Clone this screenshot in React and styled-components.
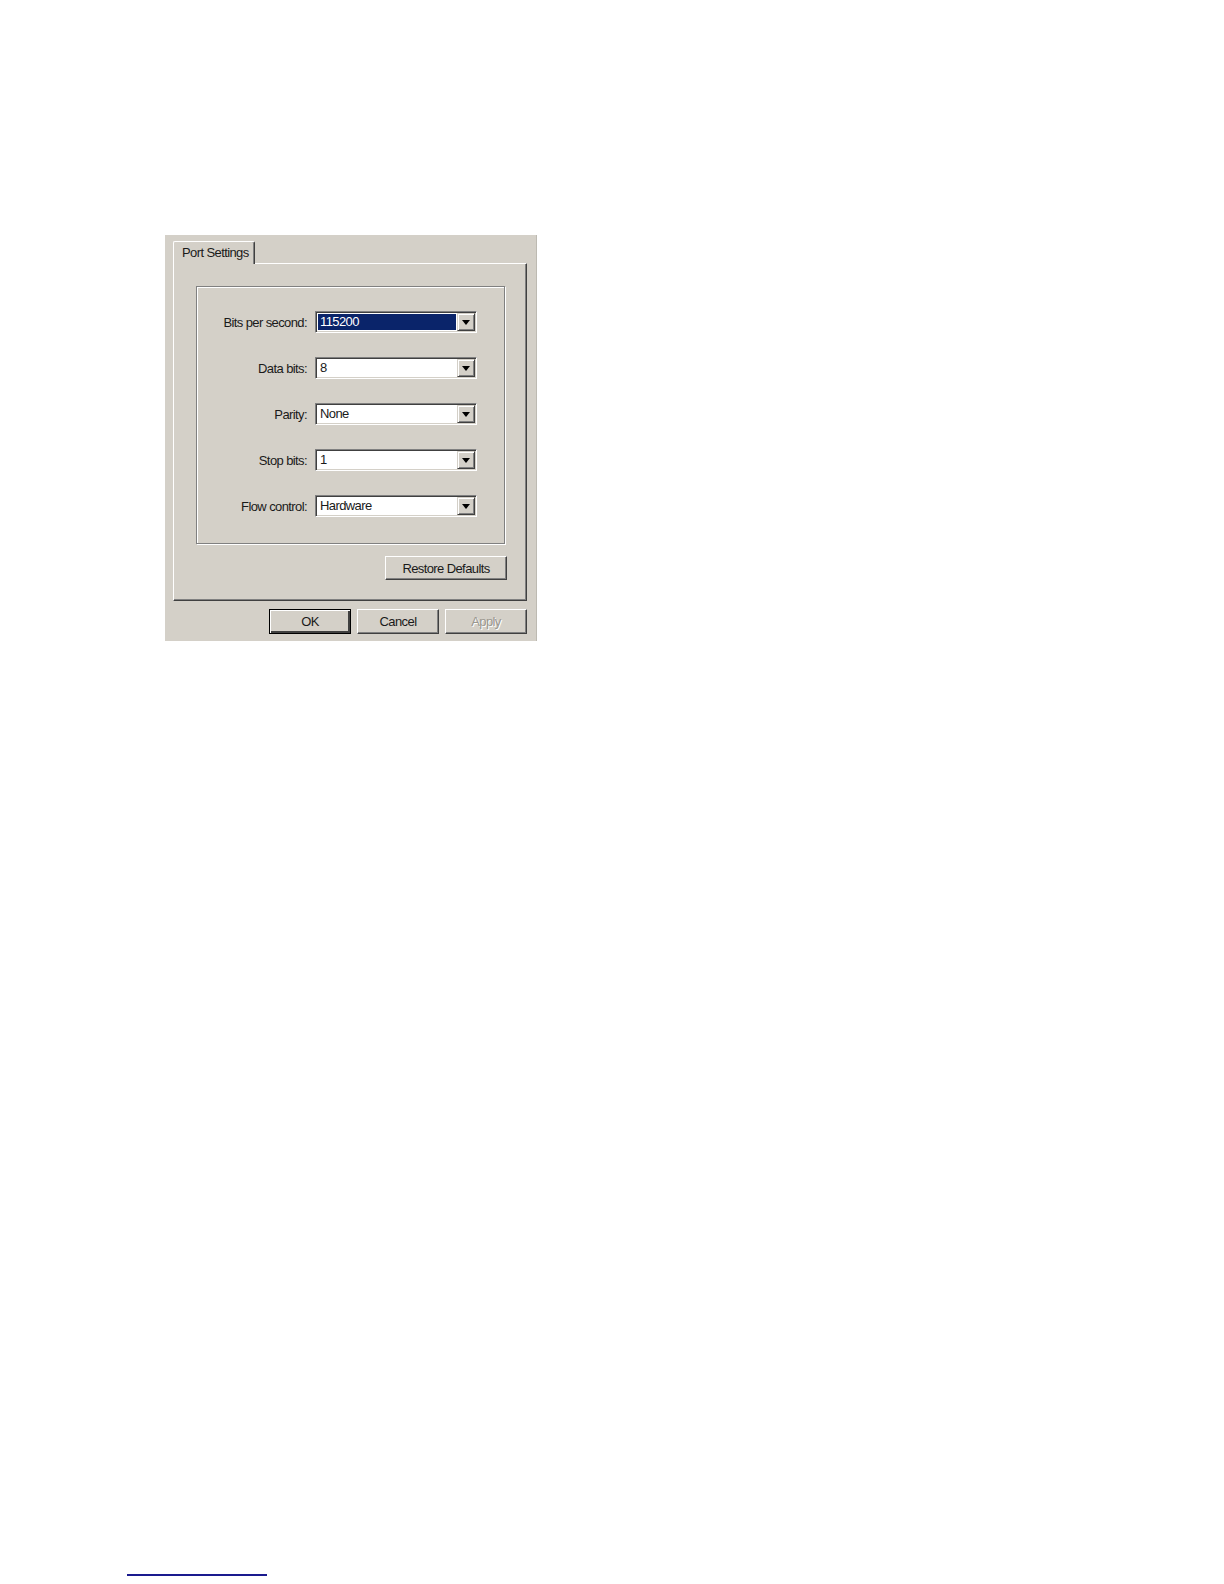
import React from 'react';
import styled, { createGlobalStyle, css } from 'styled-components';

const campos = [
  { label: 'Bits per second:', value: '115200', selected: true },
  { label: 'Data bits:', value: '8' },
  { label: 'Parity:', value: 'None' },
  { label: 'Stop bits:', value: '1' },
  { label: 'Flow control:', value: 'Hardware' },
];

const App = () => (
  <>
    <GlobalStyle />
    <Page>
      <Dialog>
        <TabStrip>
          <Tab>Port Settings</Tab>
        </TabStrip>

        <Panel>
          <GroupBox>
            {campos.map((campo) => (
              <React.Fragment key={campo.label}>
                <FieldLabel>{campo.label}</FieldLabel>
                <Combo>
                  <ComboValue $selected={campo.selected}>{campo.value}</ComboValue>
                  <DropButton>
                    <Arrow />
                  </DropButton>
                </Combo>
              </React.Fragment>
            ))}
          </GroupBox>

          <PanelFooter>
            <Button $width={122} $height={24}>Restore Defaults</Button>
          </PanelFooter>
        </Panel>

        <ButtonBar>
          <Button $isDefault>OK</Button>
          <Button>Cancel</Button>
          <Button disabled>Apply</Button>
        </ButtonBar>
      </Dialog>

      <FootnoteRule />
    </Page>
  </>
);

// Estilos
const GlobalStyle = createGlobalStyle`
  body {
    margin: 0;
    background: #ffffff;
    font-family: "Liberation Sans", Arial, sans-serif;
    font-size: 13px;
    letter-spacing: -0.6px;
    color: #1a1a1a;
  }
`;

const Page = styled.div`
  padding-top: 235px;
  min-height: 1584px;
  box-sizing: border-box;
`;

const Dialog = styled.div`
  width: 372px;
  height: 406px;
  margin-left: 165px;
  box-sizing: border-box;
  background-color: #d4d0c8;
  border-right: 1px solid #bdbab2;
  padding: 6px 9px 0 8px;
`;

const TabStrip = styled.div`
  display: flex;
  height: 22px;
`;

const Tab = styled.div`
  position: relative;
  z-index: 1;
  width: 82px;
  height: 23px;
  box-sizing: border-box;
  padding: 2px 0 0 8px;
  line-height: 17px;
  white-space: nowrap;
  background-color: #d4d0c8;
  border-top: 1px solid #ffffff;
  border-left: 1px solid #ffffff;
  border-right: 1px solid #404040;
  border-radius: 2px 2px 0 0;
  box-shadow: inset -1px 0 #808080;
`;

const Panel = styled.div`
  width: 354px;
  height: 338px;
  box-sizing: border-box;
  padding: 22px 21px 0 22px;
  border-top: 1px solid #ffffff;
  border-left: 1px solid #ffffff;
  border-right: 1px solid #404040;
  border-bottom: 1px solid #404040;
  box-shadow: inset -1px -1px #808080;
`;

const GroupBox = styled.div`
  display: grid;
  grid-template-columns: 110px 162px;
  column-gap: 8px;
  row-gap: 24px;
  align-items: center;
  align-content: start;
  height: 258px;
  box-sizing: border-box;
  padding-top: 24px;
  border: 1px solid #808080;
  box-shadow: inset 1px 1px #ffffff, 1px 1px #ffffff;
`;

const FieldLabel = styled.span`
  text-align: right;
  white-space: nowrap;
`;

const Combo = styled.div`
  display: flex;
  align-items: stretch;
  height: 22px;
  box-sizing: border-box;
  background: #ffffff;
  border-top: 1px solid #808080;
  border-left: 1px solid #808080;
  border-right: 1px solid #ffffff;
  border-bottom: 1px solid #ffffff;
  box-shadow: inset 1px 1px #404040, inset -1px -1px #d4d0c8;
  padding: 1px;
`;

const ComboValue = styled.span`
  flex: 1;
  margin: 1px;
  padding-left: 2px;
  line-height: 16px;
  white-space: nowrap;

  ${({ $selected }) =>
    $selected &&
    css`
      background-color: #0a246a;
      color: #ffffff;
    `}
`;

const DropButton = styled.div`
  display: flex;
  align-items: center;
  justify-content: center;
  width: 18px;
  box-sizing: border-box;
  padding-top: 1px;
  background-color: #d4d0c8;
  border-top: 1px solid #d4d0c8;
  border-left: 1px solid #d4d0c8;
  border-right: 1px solid #404040;
  border-bottom: 1px solid #404040;
  box-shadow: inset 1px 1px #ffffff, inset -1px -1px #808080;
`;

const Arrow = styled.span`
  width: 0;
  height: 0;
  border-left: 4px solid transparent;
  border-right: 4px solid transparent;
  border-top: 5px solid #000000;
`;

const PanelFooter = styled.div`
  display: flex;
  justify-content: flex-end;
  margin: 12px -2px 0 0;
`;

const ButtonBar = styled.div`
  display: flex;
  justify-content: flex-end;
  gap: 6px;
  margin-top: 8px;
`;

const Button = styled.button`
  width: ${({ $width }) => $width || 82}px;
  height: ${({ $height }) => $height || 25}px;
  box-sizing: border-box;
  padding: 0;
  font: inherit;
  letter-spacing: inherit;
  color: #1a1a1a;
  background-color: #d4d0c8;
  border-top: 1px solid #ffffff;
  border-left: 1px solid #ffffff;
  border-right: 1px solid #404040;
  border-bottom: 1px solid #404040;
  box-shadow: inset -1px -1px #808080;

  ${({ $isDefault }) =>
    $isDefault &&
    css`
      border: 1px solid #000000;
      box-shadow: inset 1px 1px #ffffff, inset -2px -2px #404040;
    `}

  &:disabled {
    color: #9a978f;
    text-shadow: 1px 1px #ffffff;
  }
`;

const FootnoteRule = styled.div`
  width: 140px;
  height: 2px;
  margin: 933px 0 0 127px;
  background-color: #1a1a8e;
`;

export default App;
